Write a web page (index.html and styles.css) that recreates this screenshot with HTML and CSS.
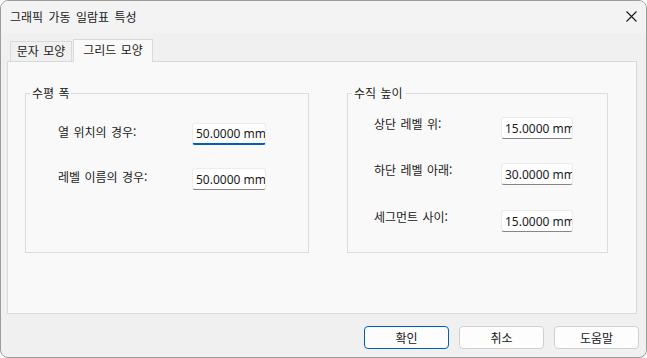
FILE: index.html
```html
<!DOCTYPE html>
<html lang="ko">
<head>
  <meta charset="UTF-8" />
  <title>그래픽 가동 일람표 특성</title>
  <link rel="stylesheet" href="styles.css">
</head>
<body>

<div class="window">
  <div class="titlebar">
    <span class="title">그래픽 가동 일람표 특성</span>
    <button class="close" title="닫기">
      <svg width="11" height="11" viewBox="0 0 11 11">
        <path d="M0.5 0.5 L10.5 10.5 M10.5 0.5 L0.5 10.5" stroke="#1a1a1a" stroke-width="1.1" fill="none"/>
      </svg>
    </button>
  </div>

  <div class="tabs">
    <div class="tab">문자 모양</div>
    <div class="tab active">그리드 모양</div>
  </div>

  <div class="panel">
    <fieldset class="group group-h">
      <legend>수평 폭</legend>
      <div class="fields">
        <div class="row">
          <label for="colPos">열 위치의 경우:</label>
          <input id="colPos" class="focused" value="50.0000 mm" autofocus />
        </div>
        <div class="row">
          <label for="labelName">레벨 이름의 경우:</label>
          <input id="labelName" value="50.0000 mm" />
        </div>
      </div>
    </fieldset>

    <fieldset class="group group-v">
      <legend>수직 높이</legend>
      <div class="fields">
        <div class="row">
          <label for="aboveTop">상단 레벨 위:</label>
          <input id="aboveTop" value="15.0000 mm" />
        </div>
        <div class="row">
          <label for="belowBottom">하단 레벨 아래:</label>
          <input id="belowBottom" value="30.0000 mm" />
        </div>
        <div class="row">
          <label for="between">세그먼트 사이:</label>
          <input id="between" value="15.0000 mm" />
        </div>
      </div>
    </fieldset>
  </div>

  <div class="footer">
    <button class="btn default">확인</button>
    <button class="btn">취소</button>
    <button class="btn">도움말</button>
  </div>
</div>

</body>
</html>
```

FILE: styles.css
```css
body {
  margin: 0;
  background-color: #ffffff;
  font-family: "Noto Sans CJK KR", "Noto Sans", sans-serif;
  font-size: 12px;
  color: #1a1a1a;
}
.window {
  width: 647px;
  height: 358px;
  box-sizing: border-box;
  border: 1px solid #9c9c9c;
  border-radius: 8px;
  background-color: #f0f0f0;
  overflow: hidden;
}
.titlebar {
  height: 32px;
  background-color: #f3f3f3;
  display: flex;
  align-items: center;
  justify-content: space-between;
  padding: 0 9px 2px 9px;
  box-sizing: border-box;
}
.title {
  font-size: 12px;
  word-spacing: 2px;
}
.close {
  background: none;
  border: none;
  padding: 0;
  width: 11px;
  height: 11px;
  display: flex;
}
.tabs {
  display: flex;
  align-items: flex-end;
  height: 22px;
  margin-top: 6px;
  padding-left: 9px;
}
.tab {
  box-sizing: border-box;
  height: 20px;
  width: 62px;
  border: 1px solid #d9d9d9;
  border-bottom: none;
  text-align: center;
  line-height: 18px;
  word-spacing: 1px;
}
.tab.active {
  position: relative;
  z-index: 1;
  width: 80px;
  height: 23px;
  margin-bottom: -1px;
  margin-left: 1px;
  background-color: #f9f9f9;
  line-height: 19px;
}
.panel {
  margin: 0 9px 0 6px;
  height: 253px;
  box-sizing: border-box;
  border: 1px solid #d9d9d9;
  background-color: #f9f9f9;
  display: flex;
  align-items: flex-start;
  gap: 38px;
  padding: 24px 0 0 17px;
}
.group {
  margin: 0;
  padding: 0;
  box-sizing: border-box;
  height: 167px;
  border: 1px solid #dcdcdc;
}
.group legend {
  padding: 0 2px;
  margin-left: 4px;
  line-height: 14px;
  word-spacing: 1px;
}
.fields {
  display: flex;
  flex-direction: column;
  gap: 23px;
}
.group-h {
  width: 284px;
}
.group-h .fields {
  padding: 23px 0 0 32px;
}
.group-v {
  width: 261px;
}
.group-v .fields {
  padding: 17px 0 0 26px;
  gap: 24px;
}
.group-v .row:last-child {
  margin-top: 1px;
}
.row {
  display: flex;
  align-items: flex-start;
}
.row label {
  line-height: 14px;
  word-spacing: 1px;
}
.group-h .row label {
  width: 134px;
  padding-top: 2px;
}
.group-v .row label {
  width: 127px;
}
.row input {
  box-sizing: border-box;
  height: 22px;
  width: 74px;
  padding: 0 0 0 3px;
  border: 1px solid #ececec;
  border-bottom-color: #868686;
  border-radius: 3px;
  background-color: #ffffff;
  font-family: "Noto Sans", sans-serif;
  font-size: 12px;
  color: #1a1a1a;
  caret-color: #000000;
  outline: none;
}
.group-v .row input {
  width: 72px;
}
.row input.focused {
  border-bottom: 2px solid #005fb8;
}
.footer {
  display: flex;
  justify-content: flex-end;
  gap: 10px;
  padding: 12px 7px 0 0;
}
.btn {
  width: 85px;
  height: 23px;
  box-sizing: border-box;
  background-color: #fdfdfd;
  border: 1px solid #d0d0d0;
  border-radius: 4px;
  font-family: "Noto Sans CJK KR", sans-serif;
  font-size: 12px;
  color: #1a1a1a;
  padding: 0;
}
.btn.default {
  border-color: #005fb8;
}
```
